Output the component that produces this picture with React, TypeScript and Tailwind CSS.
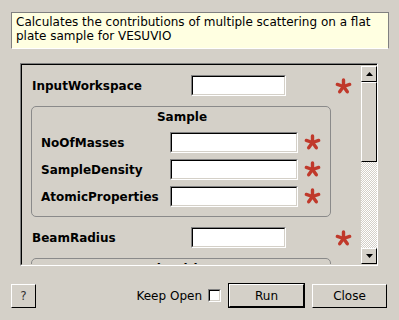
import React from 'react';

// Red "mandatory" marker drawn as a five-armed asterisk
const Star: React.FC = () => (
  <svg width="17" height="17" viewBox="0 0 17 17" className="shrink-0">
    {[-90, -18, 54, 126, 198].map((a) => {
      const r = (a * Math.PI) / 180;
      return (
        <line
          key={a}
          x1="8.5"
          y1="8.5"
          x2={8.5 + 6.5 * Math.cos(r)}
          y2={8.5 + 6.5 * Math.sin(r)}
          stroke="#c0392b"
          strokeWidth="3.4"
          strokeLinecap="round"
        />
      );
    })}
  </svg>
);

const Field: React.FC<{ wide?: boolean }> = ({ wide }) => (
  <div
    className={
      wide
        ? 'w-[128px] h-[21px] border border-t-[#808080] border-l-[#808080] border-b-white border-r-white shrink-0'
        : 'w-[95px] h-[21px] border border-t-[#808080] border-l-[#808080] border-b-white border-r-white shrink-0'
    }
  >
    <div className="h-full w-full bg-white border border-t-black border-l-black border-b-[#d4d0c8] border-r-[#d4d0c8]" />
  </div>
);

const Arrow: React.FC<{ down?: boolean }> = ({ down }) => (
  <div className="h-[16px] border border-t-white border-l-white border-b-black border-r-black bg-[#d4d0c8] flex items-center justify-center">
    <svg width="7" height="4" viewBox="0 0 7 4">
      <polygon points={down ? '0,0 7,0 3.5,4' : '0,4 7,4 3.5,0'} fill="#000" />
    </svg>
  </div>
);

const GroupRow: React.FC<{ label: string }> = ({ label }) => (
  <div className="flex items-center h-[21px]">
    <div className="w-[129px] font-bold">{label}</div>
    <Field wide />
    <div className="ml-[6px]">
      <Star />
    </div>
  </div>
);

const TopRow: React.FC<{ label: string }> = ({ label }) => (
  <div className="flex items-center h-[21px]">
    <div className="w-[160px] pl-[1px] font-bold">{label}</div>
    <Field />
    <div className="ml-[49px] mt-[2px]">
      <Star />
    </div>
  </div>
);

export default function App() {
  return (
    <div className="w-[399px] h-[320px] bg-[#d4d0c8] font-['DejaVu_Sans',sans-serif] text-[12px] text-black pt-[12px] pl-[11px] overflow-hidden">
      <div className="w-[378px] h-[37px] bg-[#ffffe1] border border-t-[#808080] border-l-[#808080] border-r-[#808080] border-b-white px-[4px] pt-[2px] leading-[14px]">
        Calculates the contributions of multiple scattering on a flat plate sample for VESUVIO
      </div>

      <div className="ml-[9px] mt-[14px] w-[358px] h-[203px] border border-t-[#808080] border-l-[#808080] border-b-white border-r-white">
        <div className="h-full flex border-t border-l border-t-black border-l-black border-b border-b-[#d4d0c8]">
          <div className="flex-1 overflow-hidden pl-[9px] pt-[10px]">
            <TopRow label="InputWorkspace" />
            <div className="mt-[10px] w-[300px] h-[111px] border border-[#8a8a8a] rounded-[5px] px-[9px] pt-[3px]">
              <div className="text-center font-bold leading-[15px] pl-[2px]">Sample</div>
              <div className="mt-[7px] flex flex-col gap-[6px]">
                <GroupRow label="NoOfMasses" />
                <GroupRow label="SampleDensity" />
                <GroupRow label="AtomicProperties" />
              </div>
            </div>
            <div className="mt-[10px]">
              <TopRow label="BeamRadius" />
            </div>
            <div className="mt-[10px] w-[300px] h-[80px] border border-[#8a8a8a] rounded-[5px] pt-[3px]">
              <div className="text-center font-bold leading-[15px]">Algorithm</div>
            </div>
          </div>
          <div className="w-[16px] flex flex-col pt-[1px]">
            <Arrow />
            <div className="h-[80px] border border-t-white border-l-white border-b-black border-r-black bg-[#d4d0c8]" />
            <div className="flex-1 bg-[repeating-conic-gradient(#ffffff_0_25%,#d4d0c8_0_50%)] bg-[length:2px_2px]" />
            <Arrow down />
          </div>
        </div>
      </div>

      <div className="mt-[17px] flex items-center pr-[12px]">
        <div className="w-[25px] h-[24px] border border-t-white border-l-white border-b-black border-r-black flex items-center justify-center text-[#333]">
          ?
        </div>
        <div className="flex-1" />
        <span>Keep Open</span>
        <div className="ml-[6px] w-[13px] h-[13px] border border-t-[#808080] border-l-[#808080] border-b-white border-r-white">
          <div className="h-full w-full bg-white border border-t-black border-l-black border-b-[#d4d0c8] border-r-[#d4d0c8]" />
        </div>
        <div className="ml-[7px] w-[77px] h-[25px] border border-black">
          <div className="h-full w-full border border-t-white border-l-white border-b-black border-r-black flex items-center justify-center">
            Run
          </div>
        </div>
        <div className="ml-[7px] w-[75px] h-[24px] border border-t-white border-l-white border-b-black border-r-black flex items-center justify-center">
          Close
        </div>
      </div>
    </div>
  );
}
